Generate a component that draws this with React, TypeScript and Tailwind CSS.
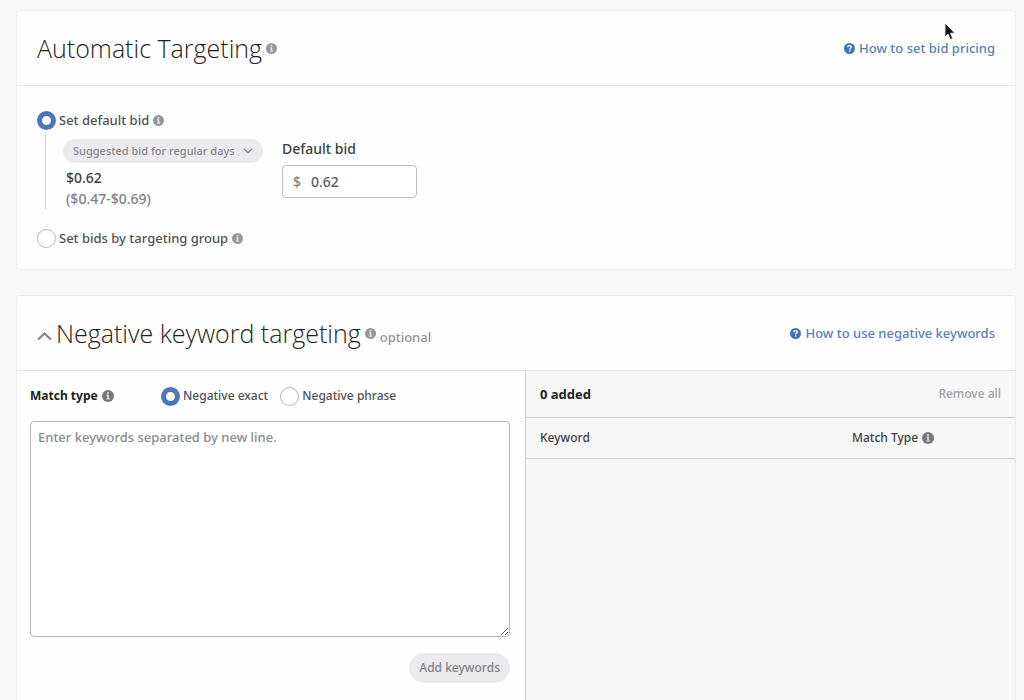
import { useState } from "react";
import type { ReactNode } from "react";

function InfoIcon({ className }: { className: string }) {
  return (
    <svg viewBox="0 0 12 12" className={`shrink-0 ${className}`} aria-hidden="true">
      <circle cx="6" cy="6" r="6" fill="currentColor" />
      <path d="M5.1 2.1h1.8v1.6H5.1zM4.4 4.6h2.5v3.9h.8v1H4.3v-1h.9V5.6h-.8z" fill="#fff" fillOpacity="0.75" />
    </svg>
  );
}

function HelpIcon() {
  return (
    <svg viewBox="0 0 12 12" className="h-[11px] w-[11px] shrink-0" aria-hidden="true">
      <circle cx="6" cy="6" r="6" fill="#4671b8" />
      <path
        d="M4.1 4.6C4.1 3.4 4.9 2.8 6 2.8s1.9.6 1.9 1.6c0 1.3-1.7 1.3-1.7 2.6"
        fill="none"
        stroke="#fff"
        strokeWidth="1.4"
      />
      <rect x="5.4" y="8" width="1.5" height="1.5" fill="#fff" />
    </svg>
  );
}

function HelpLink({ children }: { children: ReactNode }) {
  return (
    <a href="#help" className="flex items-center gap-1 text-[13px] leading-5 text-[#5c7db8]">
      <HelpIcon />
      {children}
    </a>
  );
}

type RadioProps = {
  name: string;
  label: string;
  checked: boolean;
  onChange: () => void;
  className: string;
};

function Radio({ name, label, checked, onChange, className }: RadioProps) {
  return (
    <label className={`flex items-center gap-[3px] leading-5 text-[#505256] ${className}`}>
      <input
        type="radio"
        name={name}
        checked={checked}
        onChange={onChange}
        className="h-[19px] w-[19px] shrink-0 appearance-none rounded-full border border-[#b5b7bc] bg-white checked:border-[5px] checked:border-[#4a76bb]"
      />
      {label}
    </label>
  );
}

export default function App() {
  const [mode, setMode] = useState("default");
  const [match, setMatch] = useState("exact");

  return (
    <main className="relative flex min-h-screen flex-col gap-[25px] bg-[#f8f8f8] pr-2 pl-4 pt-2.5 font-['Noto_Sans','Open_Sans',sans-serif] text-[13px] leading-5 font-medium text-[#3d3e40]">
      <section className="rounded-sm border border-[#ededee] bg-[#fefefe]">
        <header className="flex h-[75px] items-center justify-between border-b border-[#e9e9e9] px-5">
          <div className="flex items-center gap-1">
            <h1 className="font-['Open_Sans','Noto_Sans',sans-serif] text-[25px] leading-8 font-light text-[#1f1f1f]">Automatic Targeting</h1>
            <InfoIcon className="h-[11px] w-[11px] text-[#96979a]" />
          </div>
          <HelpLink>How to set bid pricing</HelpLink>
        </header>

        <div className="px-5 pt-6 pb-[21px]">
          <div className="flex items-center gap-1">
            <Radio className="text-[13px]" name="bid" label="Set default bid" checked={mode === "default"} onChange={() => setMode("default")} />
            <InfoIcon className="h-[11px] w-[11px] text-[#96979a]" />
          </div>
          <div className="mt-[3px] ml-2 flex gap-[19px] border-l border-[#d8d8da] pt-1.5 pl-[17px]">
            <div>
              <div className="relative flex items-center">
                <select
                  aria-label="Suggested bid"
                  className="h-6 w-[200px] appearance-none rounded-full bg-[#ebebee] pl-2.5 text-[11px] text-[#85878c]"
                >
                  <option>Suggested bid for regular days</option>
                </select>
                <svg viewBox="0 0 10 6" className="pointer-events-none absolute right-2.5 h-1.5 w-2.5" aria-hidden="true">
                  <path d="M1 1l4 3.6L9 1" fill="none" stroke="#85878c" strokeWidth="1.3" />
                </svg>
              </div>
              <div className="pt-1 pl-[3px] text-sm">
                <p className="leading-[21px]">$0.62</p>
                <p className="leading-[21px] text-[#808287]">($0.47-$0.69)</p>
              </div>
            </div>
            <div>
              <label htmlFor="default-bid" className="block text-sm leading-5">
                Default bid
              </label>
              <div className="mt-1.5 flex h-[33px] w-[135px] items-center gap-2.5 rounded border border-[#bcbdc0] bg-white px-2.5 text-sm">
                <span className="text-[#808287]">$</span>
                <input id="default-bid" defaultValue="0.62" className="w-full min-w-0 bg-transparent text-[#5b5d61] outline-none" />
              </div>
            </div>
          </div>
          <div className="mt-[19px] flex items-center gap-1">
            <Radio className="text-[13px]" name="bid" label="Set bids by targeting group" checked={mode === "group"} onChange={() => setMode("group")} />
            <InfoIcon className="h-[11px] w-[11px] text-[#96979a]" />
          </div>
        </div>
      </section>

      <section className="flex flex-1 flex-col rounded-t-sm border border-b-0 border-[#ededee] bg-[#fefefe]">
        <header className="flex h-[75px] items-center justify-between border-b border-[#e5e5e5] px-5">
          <div className="flex items-center gap-1">
            <button type="button" aria-label="Collapse section" className="pt-1.5">
              <svg viewBox="0 0 15 10" className="h-2.5 w-[15px]" aria-hidden="true">
                <path d="M1 8.5l6.5-6L14 8.5" fill="none" stroke="#85868a" strokeWidth="2.2" />
              </svg>
            </button>
            <h2 className="font-['Open_Sans','Noto_Sans',sans-serif] text-[25px] leading-8 font-light text-[#1f1f1f]">Negative keyword targeting</h2>
            <InfoIcon className="h-[11px] w-[11px] text-[#96979a]" />
            <span className="pt-2 text-[#919397]">optional</span>
          </div>
          <HelpLink>How to use negative keywords</HelpLink>
        </header>

        <div className="grid flex-1 grid-cols-[51fr_49fr]">
          <div className="flex flex-col border-r border-[#d0d0d2] pr-[15px] pl-[13px] pt-[15px]">
            <div className="flex items-center">
              <div className="flex w-[131px] items-center gap-1">
                <span className="text-xs leading-5 font-bold text-[#222]">Match type</span>
                <InfoIcon className="h-3 w-3 text-[#77787b]" />
              </div>
              <div className="flex gap-3">
                <Radio className="text-xs" name="match" label="Negative exact" checked={match === "exact"} onChange={() => setMatch("exact")} />
                <Radio className="text-xs" name="match" label="Negative phrase" checked={match === "phrase"} onChange={() => setMatch("phrase")} />
              </div>
            </div>
            <textarea
              aria-label="Keywords"
              placeholder="Enter keywords separated by new line."
              className="mt-[15px] h-[216px] w-full rounded border border-[#b4b5b8] bg-white px-[7px] py-[5px] placeholder:text-[#898b90]"
            />
            <button type="button" className="mt-4 h-[30px] self-end rounded-full bg-[#ebebee] px-2.5 text-xs text-[#808287]">
              Add keywords
            </button>
          </div>

          <div className="bg-[#f7f7f7]">
            <div className="flex h-[47px] items-center justify-between border-b border-[#d0d0d2] px-3.5">
              <span className="font-bold text-[#222]">0 added</span>
              <button type="button" className="text-xs text-[#a0a1a3]">
                Remove all
              </button>
            </div>
            <table className="w-full border-b border-[#d0d0d2] text-left text-xs">
              <thead>
                <tr className="h-10">
                  <th className="w-2/3 pl-3.5 font-medium">Keyword</th>
                  <th className="font-medium">
                    <span className="flex items-center gap-1">
                      Match Type
                      <InfoIcon className="h-3 w-3 text-[#77787b]" />
                    </span>
                  </th>
                </tr>
              </thead>
            </table>
          </div>
        </div>
      </section>

      <svg viewBox="0 0 12 19" className="pointer-events-none absolute top-[22px] left-[944px] h-[19px] w-3" aria-hidden="true">
        <path
          d="M1 1v14l3.1-2.9 2.3 5.4 2.4-1-2.3-5.3h4.4z"
          fill="#111"
          stroke="#fff"
          strokeWidth="0.8"
        />
      </svg>
    </main>
  );
}
